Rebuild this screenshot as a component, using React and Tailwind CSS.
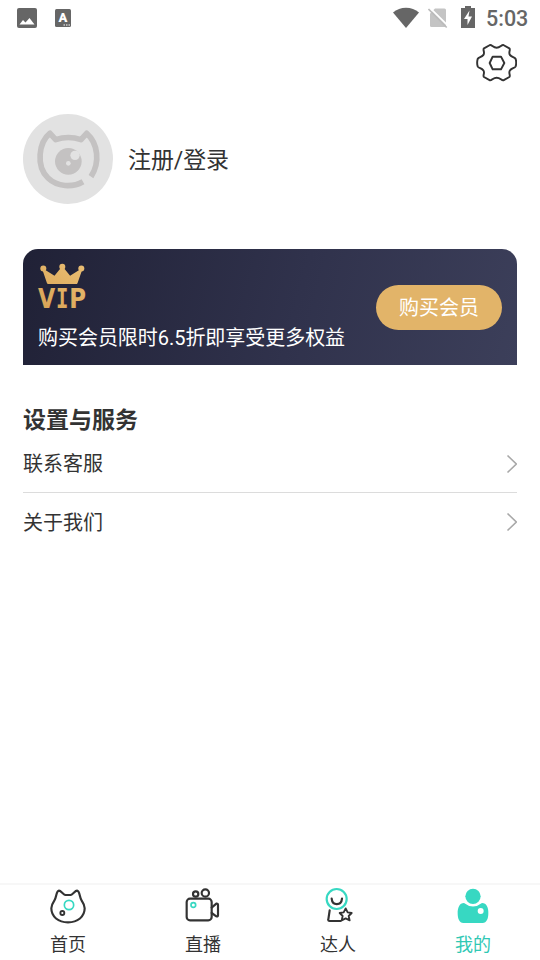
import React from 'react';

function StatusBar() {
  return (
    <div className="flex h-9 shrink-0 items-center pl-[17px] pr-3 text-[#666]">
      <svg className="h-5 w-5" viewBox="0 0 20 20">
        <rect width="20" height="20" rx="2" fill="#666" />
        <path d="M2.500 16.500 6 12l2.500 2.500L12.500 10l5 6.500Z" fill="#fff" />
      </svg>
      <svg className="ml-[18px] h-[18px] w-4" viewBox="0 0 16 18">
        <rect width="16" height="18" rx="1.500" fill="#666" />
        <text x="8" y="13" textAnchor="middle" fontSize="13" fontWeight="900" fill="#fff" className="font-[Roboto]">A</text>
        <path d="M8.500 16h1.500M11 16h1.500M13.500 16h1.500" stroke="#fff" strokeWidth="1" />
      </svg>
      <svg className="-mt-px ml-auto h-[22px] w-[26px]" viewBox="0 0 26 22">
        <path d="M0 5.500C7-1 19-1 26 5.500L13 21Z" fill="#666" />
      </svg>
      <svg className="ml-[9px] h-[22px] w-5" viewBox="0 0 20 22">
        <path d="M7 1.500h9.500a1.500 1.500 0 0 1 1.500 1.500V18.500a1.500 1.500 0 0 1-1.500 1.500H3.500A1.500 1.500 0 0 1 2 18.500V6.500Z" fill="#c4c4c4" />
        <path d="M1 0 21 19.700" stroke="#fff" strokeWidth="1.800" />
        <path d="M.500 2 18.700 20.500" stroke="#bbb" strokeWidth="1.600" />
      </svg>
      <svg className="-mt-0.5 ml-[13px] h-[22px] w-[14px]" viewBox="0 0 14 22">
        <path d="M4 0h6v2h4v20H0V2h4Z" fill="#666" />
        <path d="M8.500 4.500 3 13h3.500v6L11 10.500H7.500Z" fill="#fff" />
      </svg>
      <span className="ml-[11px] mt-px w-[42px] whitespace-nowrap text-[21.500px] font-medium leading-6">5:03</span>
    </div>
  );
}

function Gear() {
  return (
    <svg className="h-[39px] w-[42px]" viewBox="0 0 126 117" fill="none" stroke="#333" strokeWidth="5.800" strokeLinejoin="round">
      <path d="M45 6C51 5 54 14 65 14S79 5 85 6L103 16C108 20 99 29 105 36S119 42 122 48C124 55 124 63 122 70C119 76 111 75 105 82S108 98 103 102L85 112C79 113 76 104 65 104S51 113 45 112L27 102C22 98 31 89 25 82S11 76 8 70C6 63 6 55 8 48C11 42 19 43 25 36S22 20 27 16Z" />
      <path d="M53 41H78L88 60 78 79H53L44 60Z" />
    </svg>
  );
}

function Avatar() {
  return (
    <svg className="h-[90px] w-[90px]" viewBox="0 0 270 270">
      <circle cx="135" cy="135" r="135" fill="#e2e2e2" />
      <path
        d="M180 203C148 221 103 219 75 192C38 157 47 85 81 58L98 77Q136 64 174 77L191 58C225 88 232 145 204 188"
        fill="none"
        stroke="#c4c2c2"
        strokeWidth="17"
        strokeLinejoin="round"
      />
      <circle cx="136" cy="142" r="40" fill="#c4c2c2" />
      <circle cx="156" cy="124" r="14" fill="#e2e2e2" />
      <circle cx="136" cy="148" r="7" fill="#e2e2e2" />
    </svg>
  );
}

function VipLogo() {
  return (
    <svg className="h-[46px] w-12 overflow-visible" viewBox="0 0 48 46">
      <defs>
        <linearGradient id="gold" gradientUnits="userSpaceOnUse" x1="40" y1="0" x2="8" y2="46">
          <stop stopColor="#e9bd72" />
          <stop offset="1" stopColor="#d9a557" />
        </linearGradient>
      </defs>
      <g fill="url(#gold)">
        <circle cx="5.300" cy="5.600" r="3" />
        <circle cx="24.300" cy="3.800" r="3" />
        <circle cx="43.300" cy="5.600" r="3" />
        <path d="M4.500 7 6.500 6.500 16.500 12.800 22.800 5h3L32.100 12.800 42 6.500 44.100 7 39.500 20.300 38.800 21H9.800L9 20.300Z" />
        <g className="font-['DejaVu_Sans']" fontWeight="700" fontSize="26.500">
          <text x="0" y="45" textLength="17.200" lengthAdjust="spacingAndGlyphs">V</text>
          <text x="18" y="45" className="font-['DejaVu_Sans_Mono']" textLength="12.400" lengthAdjust="spacingAndGlyphs">I</text>
          <text x="31.200" y="45" textLength="16.800" lengthAdjust="spacingAndGlyphs">P</text>
        </g>
      </g>
    </svg>
  );
}

function SettingRow({ label, last }) {
  return (
    <div className={last ? 'flex h-[58px] items-center justify-between' : 'flex h-[58px] items-center justify-between border-b border-[#dcdcdc]'}>
      <span className="pt-px text-xl leading-7">{label}</span>
      <svg className="h-5 w-[11px]" viewBox="0 0 11 20" fill="none" stroke="#a8a8a8" strokeWidth="1.600">
        <path d="M1.500 1.500 10.300 10 1.500 18.500" />
      </svg>
    </div>
  );
}

const tabs = [
  {
    label: '首页',
    icon: (
      <>
        <path d="M30 8C36 8 42 19 49 21H65C72 19 78 8 84 8C93 9 91 28 98 38C102 44 107 51 107 61C107 86 86 103 57 103S7 86 7 61C7 51 12 44 16 38C23 28 21 9 30 8Z" />
        <circle cx="60" cy="51" r="14" stroke="#37d8c2" strokeWidth="5" />
        <circle cx="40" cy="75" r="6" strokeWidth="5.500" />
      </>
    ),
  },
  {
    label: '直播',
    icon: (
      <>
        <rect x="8" y="32" width="75" height="65" rx="10" />
        <path d="M83 59 97 47Q102 46 102 51V82Q102 87 97 85L83 75" />
        <circle cx="35" cy="18" r="8" />
        <circle cx="64" cy="15" r="11" />
        <circle cx="28" cy="51" r="7" stroke="#37d8c2" strokeWidth="5" />
      </>
    ),
  },
  {
    label: '达人',
    icon: (
      <>
        <circle cx="53" cy="33" r="30" stroke="#37d8c2" />
        <path d="M38 32C40 54 67 54 69 32M32 67 28 94Q27 99 32 99H65" />
        <path d="M80 61 86 73 98 75 89 84 92 97 80 91 68 97 71 84 62 75 74 73Z" strokeWidth="5.500" />
      </>
    ),
  },
  {
    label: '我的',
    active: true,
    icon: (
      <g fill="#37d8c2" stroke="none">
        <circle cx="57" cy="25" r="23" />
        <path d="M30 45Q57 66 84 45C98 45 104 60 103 76C103 92 98 105 86 105H28C16 105 11 92 11 76C11 60 16 45 30 45Z" />
        <circle cx="80" cy="69" r="9" fill="#fff" />
      </g>
    ),
  },
];

export default function App() {
  return (
    <div className="flex h-[960px] w-[540px] flex-col overflow-hidden bg-white font-[Roboto,'Noto_Sans_CJK_SC',sans-serif] text-[#333]">
      <StatusBar />
      <div className="flex justify-end pr-[23px] pt-[7px]">
        <Gear />
      </div>
      <main className="flex flex-1 flex-col px-[23px] pt-8">
        <div className="flex items-center gap-[15px]">
          <Avatar />
          <span className="pt-1 text-[23px] leading-8 tracking-[-0.1px]">注册/登录</span>
        </div>
        <section className="mt-[45px] flex h-[116px] items-center justify-between rounded-t-[15px] bg-linear-[105deg,#202136,#30324c_55%,#3c3f5a] px-[15px] text-white">
          <div className="flex h-full flex-col pt-[14px]">
            <VipLogo />
            <p className="mt-[15px] whitespace-nowrap text-xl leading-7 tracking-[-0.04px]">购买会员限时6.5折即享受更多权益</p>
          </div>
          <button className="h-[45px] w-[126px] rounded-full bg-[#e2b469] pt-px text-xl">购买会员</button>
        </section>
        <h2 className="mt-10 text-[23px] font-bold leading-8">设置与服务</h2>
        <div className="-mt-0.5">
          <SettingRow label="联系客服" />
          <SettingRow label="关于我们" last />
        </div>
      </main>
      <nav className="grid h-[77px] shrink-0 grid-cols-4 border-t-2 border-[#f7f7f7]">
        {tabs.map((tab) => (
          <div key={tab.label} className={tab.active ? 'flex flex-col items-center pt-[3px] text-[#30c8b4]' : 'flex flex-col items-center pt-[3px]'}>
            <svg className="h-9 w-[38px] shrink-0 overflow-visible" viewBox="0 0 114 108" fill="none" stroke="#333" strokeWidth="6.500" strokeLinejoin="round" strokeLinecap="round">
              {tab.icon}
            </svg>
            <span className="mt-[9px] pl-px text-lg leading-6">{tab.label}</span>
          </div>
        ))}
      </nav>
    </div>
  );
}
